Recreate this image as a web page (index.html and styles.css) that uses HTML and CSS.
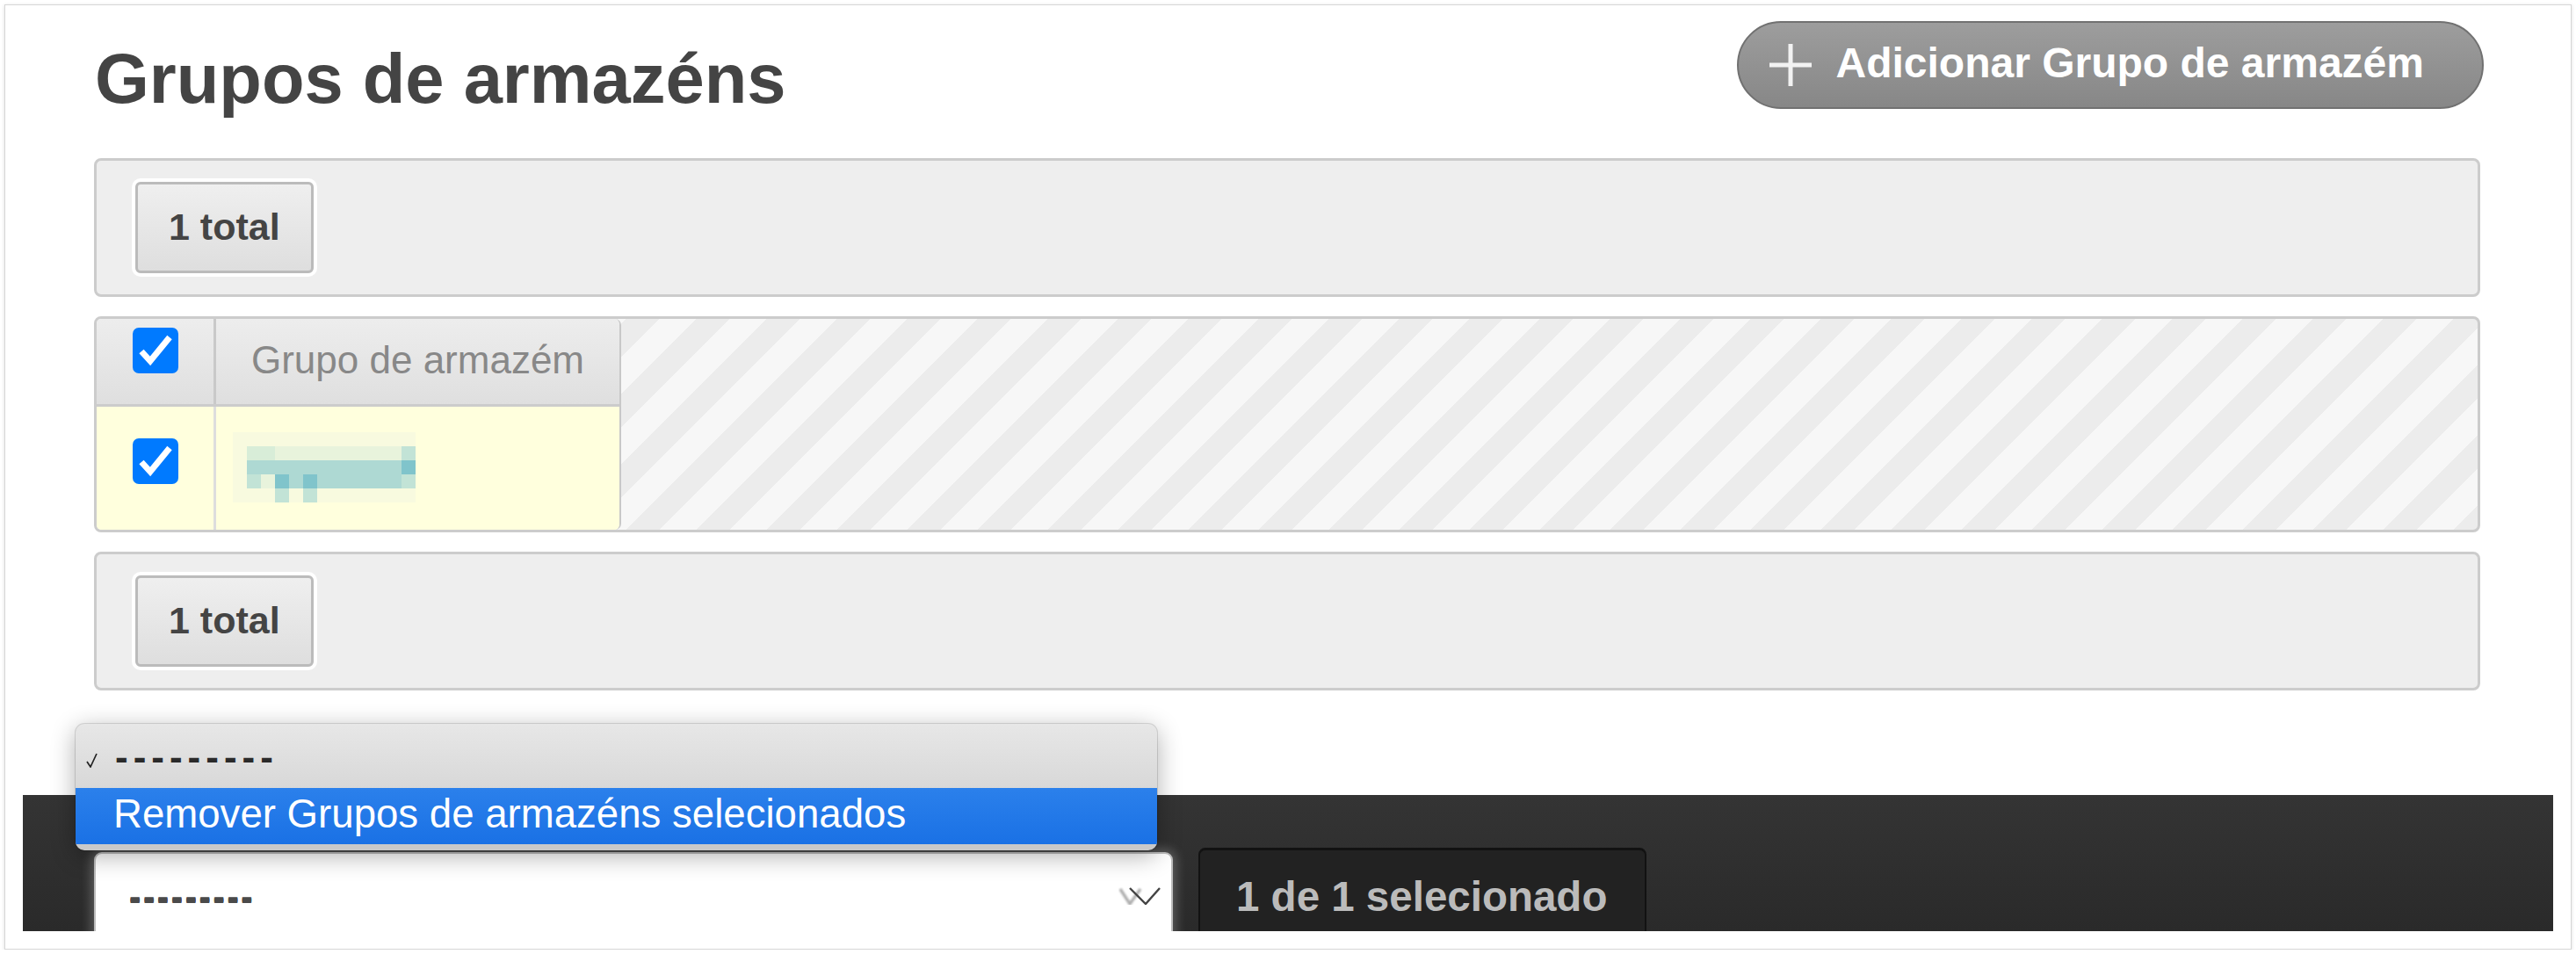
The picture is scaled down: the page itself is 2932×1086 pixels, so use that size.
FILE: index.html
```html
<!DOCTYPE html>
<html lang="pt">
<head>
<meta charset="utf-8">
<title>Grupos de armazéns</title>
<link rel="stylesheet" href="styles.css">
</head>
<body>
<div class="window">
  <div class="content">
    <div class="header">
      <h1 class="title">Grupos de armazéns</h1>
      <a class="add-btn">
        <svg class="plus" viewBox="0 0 48 48" width="48" height="48"><rect x="21.5" y="0" width="5" height="48" fill="#f2f2f2"/><rect x="0" y="21.5" width="48" height="5" fill="#f2f2f2"/></svg>
        <span class="add-label">Adicionar Grupo de armazém</span>
      </a>
    </div>

    <div class="paginator"><span class="total">1 total</span></div>

    <div class="results">
      <div class="grid">
        <div class="row head">
          <div class="cell check"><span class="cb"><svg viewBox="0 0 52 52" width="52" height="52"><polyline points="10,27 20,38 42,11" fill="none" stroke="#fff" stroke-width="7"/></svg></span></div>
          <div class="cell name">Grupo de armazém</div>
        </div>
        <div class="row body">
          <div class="cell check"><span class="cb"><svg viewBox="0 0 52 52" width="52" height="52"><polyline points="10,27 20,38 42,11" fill="none" stroke="#fff" stroke-width="7"/></svg></span></div>
          <div class="cell name">
            <div class="mosaic">
              <i class="p0"></i><i class="p0"></i><i class="p0"></i><i class="p0"></i><i class="p0"></i><i class="p0"></i><i class="p0"></i><i class="p0"></i><i class="p0"></i><i class="p0"></i><i class="p0"></i><i class="p0"></i><i class="p0"></i>
              <i class="p0"></i><i class="p2"></i><i class="p2"></i><i class="p1"></i><i class="p1"></i><i class="p1"></i><i class="p1"></i><i class="p1"></i><i class="p1"></i><i class="p1"></i><i class="p1"></i><i class="p1"></i><i class="p5"></i>
              <i class="p0"></i><i class="p3"></i><i class="p3"></i><i class="p3"></i><i class="p3"></i><i class="p3"></i><i class="p3"></i><i class="p3"></i><i class="p3"></i><i class="p3"></i><i class="p3"></i><i class="p3"></i><i class="p4"></i>
              <i class="p0"></i><i class="p5"></i><i class="p1"></i><i class="p4"></i><i class="p3"></i><i class="p4"></i><i class="p3"></i><i class="p3"></i><i class="p3"></i><i class="p3"></i><i class="p3"></i><i class="p3"></i><i class="p5"></i>
              <i class="p0"></i><i class="p0"></i><i class="p0"></i><i class="p5"></i><i class="p0"></i><i class="p5"></i><i class="p0"></i><i class="p0"></i><i class="p0"></i><i class="p0"></i><i class="p0"></i><i class="p0"></i><i class="p0"></i>
            </div>
          </div>
        </div>
      </div>
    </div>

    <div class="paginator"><span class="total">1 total</span></div>
  </div>

  <div class="actionbar">
    <div class="select">
      <span class="select-value">---------</span>
      <svg class="chevron" viewBox="0 0 48 20" width="48" height="20"><polyline class="ghost" points="2,2 13,19 25,2" fill="none" stroke="#777" stroke-width="3.4"/><polyline points="13,1 31,19 47,1" fill="none" stroke="#444" stroke-width="2.4"/></svg>
    </div>
    <div class="counter">1 de 1 selecionado</div>
  </div>

  <div class="menu">
    <div class="opt opt-current">
      <svg class="tick" viewBox="0 0 16 17" width="16" height="17"><polyline points="1,10 5,16 12,1" fill="none" stroke="#222" stroke-width="1.7"/></svg>
      <span class="opt-dashes">---------</span>
    </div>
    <div class="opt opt-active">Remover Grupos de armazéns selecionados</div>
  </div>
</div>
</body>
</html>
```

FILE: styles.css
```css
html, body {
  margin: 0;
  padding: 0;
  background: #ffffff;
}

body {
  font-family: "Liberation Sans", Arial, Helvetica, sans-serif;
  color: #444;
}

.window {
  position: relative;
  box-sizing: border-box;
  margin: 5px 0 0 5px;
  width: 2922px;
  height: 1076px;
  border: 1px solid #d6d6d6;
  box-shadow: 0 1px 4px rgba(0, 0, 0, 0.14);
  background: #fff;
  overflow: hidden;
  display: flex;
  flex-direction: column;
}

.content {
  padding: 0 103px 0 101px;
}

/* header */
.header {
  margin-top: 18px;
  display: flex;
  justify-content: space-between;
  align-items: flex-start;
}

.title {
  margin: 26px 0 0 1px;
  font-size: 79.5px;
  line-height: 1;
  font-weight: bold;
  color: #444;
  letter-spacing: 0;
}

.add-btn {
  box-sizing: border-box;
  height: 100px;
  margin-right: -4px;
  display: flex;
  align-items: center;
  padding: 0 66px 4px 35px;
  border: 2px solid #717171;
  border-radius: 50px;
  background: linear-gradient(#9d9d9d, #878787);
  color: #fff;
  text-decoration: none;
}

.plus {
  display: block;
  flex: none;
  margin: 4px 28px 0 0;
  filter: blur(0.7px);
}

.add-label {
  font-size: 48px;
  line-height: 1;
  font-weight: bold;
  white-space: nowrap;
}

/* paginator */
.paginator {
  box-sizing: border-box;
  height: 158px;
  margin-top: 50px;
  padding: 24px 44px;
  border: 3px solid #cccccc;
  border-radius: 8px;
  background: #eeeeee;
  display: flex;
  align-items: flex-start;
}

.results + .paginator {
  margin-top: 22px;
}

.total {
  box-sizing: border-box;
  height: 104px;
  padding: 0 35px;
  display: inline-flex;
  align-items: center;
  border: 3px solid #bbbbbb;
  border-radius: 6px;
  background: linear-gradient(#efefef, #dedede);
  box-shadow: 0 0 0 4px #ffffff;
  font-size: 43px;
  line-height: 1;
  font-weight: bold;
  color: #444;
}

/* results table */
.results {
  box-sizing: border-box;
  height: 246px;
  margin-top: 22px;
  border: 3px solid #cccccc;
  border-radius: 8px;
  overflow: hidden;
  background: repeating-linear-gradient(135deg, #f7f7f7 0 30px, #ececec 30px 56.57px);
}

.grid {
  box-sizing: border-box;
  width: 597px;
  height: 240px;
  border-right: 2px solid #c8c8c8;
  border-radius: 0 7px 7px 0;
  overflow: hidden;
  display: flex;
  flex-direction: column;
}

.row {
  display: flex;
  box-sizing: border-box;
}

.row.head {
  height: 100px;
  border-bottom: 3px solid #cccccc;
  background: linear-gradient(#ededed, #dfdfdf);
}

.row.body {
  height: 140px;
  background: #ffffdd;
}

.cell.check {
  box-sizing: border-box;
  width: 136px;
  flex: none;
  display: flex;
  justify-content: center;
  align-items: flex-start;
  border-right: 3px solid #c9c9c9;
  padding-top: 10px;
}

.row.body .cell.check {
  border-right-color: #dddddd;
  padding-top: 36px;
}

.cb {
  display: block;
  width: 52px;
  height: 52px;
  border-radius: 7px;
  background: #007aff;
}

.cb svg {
  display: block;
}

.cell.name {
  flex: 1;
  box-sizing: border-box;
}

.row.head .cell.name {
  padding-top: 25px;
  text-align: center;
  font-size: 44px;
  line-height: 1;
  color: #888888;
  white-space: nowrap;
}

.mosaic {
  margin: 29px 0 0 19px;
  display: grid;
  grid-template-columns: repeat(13, 16px);
  grid-auto-rows: 16px;
}

.mosaic i { display: block; }
.p0 { background: #f8fadf; }
.p1 { background: #e8f3dc; }
.p2 { background: #d8edd8; }
.p3 { background: #aed9d3; }
.p4 { background: #80c4cb; }
.p5 { background: #c2e3d6; }

/* action bar */
.actionbar {
  box-sizing: border-box;
  height: 155px;
  margin: 119px 20px 0;
  padding-left: 81px;
  background: linear-gradient(#343434, #2a2a2a);
  overflow: hidden;
  display: flex;
  align-items: flex-start;
}

.select {
  box-sizing: border-box;
  flex: none;
  width: 1228px;
  height: 120px;
  margin-top: 65px;
  padding: 0 12px 0 38px;
  border: 2px solid #bdbdbd;
  border-radius: 9px;
  background: #fff;
  box-shadow: 0 0 12px 4px rgba(255, 255, 255, 0.22);
  display: flex;
  align-items: flex-start;
}

.select-value {
  margin-top: 29px;
  font-size: 40px;
  line-height: 1;
  font-weight: bold;
  letter-spacing: 2.6px;
  color: #4a4a4a;
  text-shadow: 0 1px 0 #4a4a4a, 0 -1px 0 #4a4a4a;
}

.chevron {
  display: block;
  margin: 38px 0 0 auto;
}

.chevron .ghost {
  opacity: 0.6;
  filter: blur(1.2px);
}

.counter {
  box-sizing: border-box;
  flex: none;
  width: 510px;
  height: 130px;
  margin: 60px 0 0 29px;
  padding: 29px 0 0 41px;
  border: 3px solid #121212;
  border-width: 3px 2px 2px;
  border-radius: 8px;
  background: #222222;
  font-size: 47.5px;
  line-height: 1;
  font-weight: bold;
  color: #bbbbbb;
  white-space: nowrap;
}

/* open native select menu */
.menu {
  position: absolute;
  left: 80px;
  top: 818px;
  width: 1231px;
  height: 144px;
  border-radius: 10px;
  overflow: hidden;
  background: #c9c9c9;
  box-shadow: 0 6px 28px rgba(0, 0, 0, 0.32), 0 0 0 1px rgba(0, 0, 0, 0.12);
}

.opt {
  box-sizing: border-box;
  display: flex;
  align-items: flex-start;
}

.opt-current {
  height: 73px;
  background: linear-gradient(#e7e7e7, #d8d8d8);
  padding-left: 12px;
}

.tick {
  display: block;
  margin-top: 33px;
}

.opt-dashes {
  margin: 16px 0 0 17px;
  font-size: 44px;
  line-height: 1;
  letter-spacing: 6px;
  color: #2a2a2a;
  font-weight: bold;
}

.opt-active {
  height: 64px;
  padding: 7px 0 0 43px;
  background: linear-gradient(#2b80eb, #1a71e5);
  color: #ffffff;
  font-size: 45.6px;
  line-height: 1;
  white-space: nowrap;
}
```
